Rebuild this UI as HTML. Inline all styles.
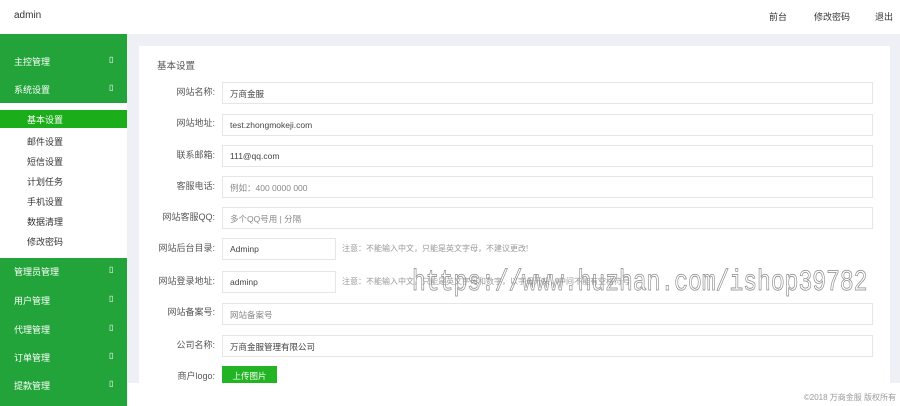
<!DOCTYPE html><html><head><meta charset="utf-8"><style>
*{margin:0;padding:0;box-sizing:border-box}
body{width:900px;height:406px;overflow:hidden;background:#eef0f5;font-family:"Liberation Sans","Noto Sans CJK SC",sans-serif;font-size:9px;color:#333;position:relative}
.top{position:absolute;left:0;top:0;width:900px;height:34px;background:#fff}
.top .a{position:absolute;left:14px;top:10px;font-size:10px}
.top span{position:absolute;top:10px;font-size:9px}
.side{position:absolute;left:0;top:34px;width:127px;height:372px;background:#23a43b}
.side .it{position:absolute;left:14px;color:#fff;font-size:9px}
.side .it b{position:absolute;left:95px;font-weight:normal;font-size:8px}
.sub{position:absolute;left:0;top:103px;width:127px;height:155px;background:#fff}
.sub div{position:absolute;left:27px;font-size:9px;color:#333}
.act{position:absolute;left:0;top:110px;width:127px;height:18px;background:#1bad1a}
.card{position:absolute;left:139px;top:46px;width:751px;height:337px;background:#fff}
.foot{position:absolute;left:128px;top:383px;width:772px;height:23px;background:#fff;text-align:right;color:#999;font-size:8px;padding:9px 4px 0 0}
.lbl{position:absolute;width:80px;left:135px;text-align:right;color:#555;font-size:9px}
.in{position:absolute;left:222px;width:651px;height:22px;border:1px solid #e6e6e6;padding:5px 7px;color:#444;font-size:8.5px}
.in.s{width:114px}
.note{position:absolute;left:342px;color:#999;font-size:8px}
.wm{position:absolute;left:412px;top:268px;font-family:"Liberation Mono",monospace;font-size:23px;line-height:23px;color:transparent;-webkit-text-stroke:0.6px #888;transform:scaleY(1.3);transform-origin:0 0;white-space:nowrap}
</style></head><body>
<div class="top"><div class="a">admin</div><span style="left:769px">前台</span><span style="left:814px">修改密码</span><span style="left:875px">退出</span></div>
<div class="side">
<div class="it" style="top:21px">主控管理<b>▯</b></div>
<div class="it" style="top:49px">系统设置<b>▯</b></div>
<div class="it" style="top:231px">管理员管理<b>▯</b></div>
<div class="it" style="top:260px">用户管理<b>▯</b></div>
<div class="it" style="top:289px">代理管理<b>▯</b></div>
<div class="it" style="top:317px">订单管理<b>▯</b></div>
<div class="it" style="top:345px">提款管理<b>▯</b></div>
</div>
<div class="sub">
<div style="top:32px">邮件设置</div><div style="top:52px">短信设置</div><div style="top:72px">计划任务</div><div style="top:92px">手机设置</div><div style="top:112px">数据清理</div><div style="top:132px">修改密码</div>
</div>
<div class="act"><span style="position:absolute;left:27px;top:3px;color:#fff;font-size:9px">基本设置</span></div>
<div class="card"><div style="position:absolute;left:18px;top:12px;font-size:9.5px;color:#555">基本设置</div></div>
<div class="lbl" style="top:85px">网站名称:</div><div class="in" style="top:82px">万商金服</div>
<div class="lbl" style="top:116px">网站地址:</div><div class="in" style="top:114px">test.zhongmokeji.com</div>
<div class="lbl" style="top:148px">联系邮箱:</div><div class="in" style="top:145px">111@qq.com</div>
<div class="lbl" style="top:179px">客服电话:</div><div class="in" style="top:176px;color:#888">例如：400 0000 000</div>
<div class="lbl" style="top:210px">网站客服QQ:</div><div class="in" style="top:207px;color:#888">多个QQ号用 | 分隔</div>
<div class="lbl" style="top:241px">网站后台目录:</div><div class="in s" style="top:238px">Adminp</div><div class="note" style="top:243px">注意：不能输入中文，只能是英文字母，不建议更改!</div>
<div class="lbl" style="top:274px">网站登录地址:</div><div class="in s" style="top:271px">adminp</div><div class="note" style="top:276px">注意：不能输入中文，只能是英文字母和数字，以字母开头，中间不能有空格符号</div>
<div class="lbl" style="top:305px">网站备案号:</div><div class="in" style="top:303px;color:#888">网站备案号</div>
<div class="lbl" style="top:338px">公司名称:</div><div class="in" style="top:335px">万商金服管理有限公司</div>
<div class="lbl" style="top:369px">商户logo:</div>
<div style="position:absolute;left:222px;top:366px;width:55px;height:18px;background:#22b422;color:#fff;font-size:8.5px;text-align:center;padding-top:4px">上传图片</div>
<div class="foot">©2018 万商金服 版权所有</div>
<div class="wm">https://www.huzhan.com/ishop39782</div>
</body></html>
